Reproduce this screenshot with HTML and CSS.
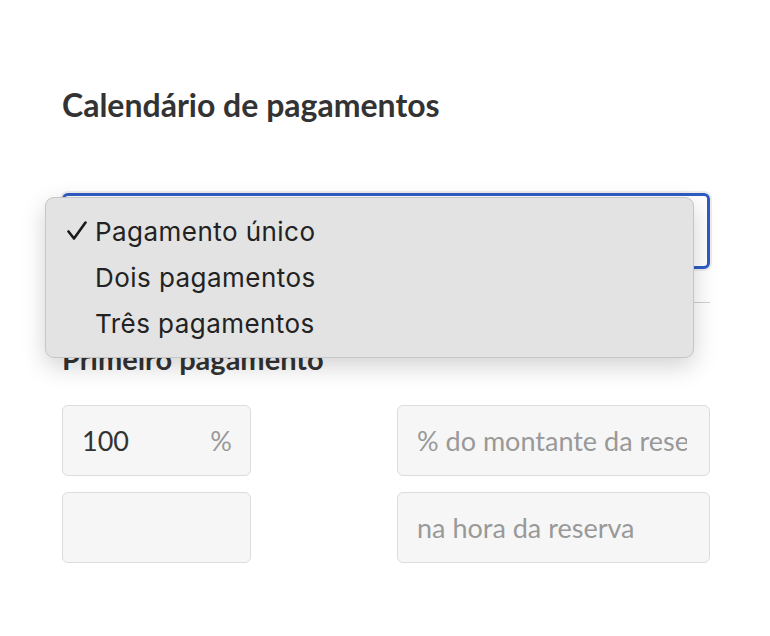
FILE: index.html
```html
<!DOCTYPE html>
<html lang="pt">
<head>
<meta charset="utf-8">
<link rel="stylesheet" href="styles.css">
</head>
<body>
<main class="page">
  <h2 class="title">Calendário de pagamentos</h2>
  <div class="select-wrap">
    <div class="select"></div>
    <ul class="menu">
      <li class="item checked"><span class="check"><svg width="20" height="20" viewBox="0 0 20 20"><path d="M1.5 10.5 L7 17.5 L18.5 1.5" fill="none" stroke="#1a1a1a" stroke-width="2.6" stroke-linecap="round" stroke-linejoin="round"/></svg></span>Pagamento único</li>
      <li class="item"><span class="check"></span>Dois pagamentos</li>
      <li class="item"><span class="check"></span>Três pagamentos</li>
    </ul>
  </div>
  <hr class="rule">
  <h3 class="subtitle">Primeiro pagamento</h3>
  <div class="fields">
    <div class="field"><span class="value">100</span><span class="unit">%</span></div>
    <div class="field wide"><span class="placeholder">% do montante da reserva</span></div>
    <div class="field"></div>
    <div class="field wide"><span class="placeholder">na hora da reserva</span></div>
  </div>
</main>
</body>
</html>
```
FILE: styles.css
```css
html, body { margin: 0; padding: 0; background: #fff; }
body { font-family: "Lato", "Open Sans", sans-serif; color: #333; }
.page { width: 648px; margin-left: 62px; padding-top: 85px; }
.title { margin: 0; font-size: 32px; font-weight: 700; line-height: 40px; color: #333; }
.select-wrap { position: relative; margin-top: 68px; }
.select {
  height: 70px; border: 3px solid #2f5cc4; border-radius: 6px;
  box-shadow: 0 0 0 2px #ececec; background: #fff;
}
.menu {
  position: absolute; left: -17px; top: 4px; width: 647px; margin: 0;
  padding: 10px 0 11px; list-style: none; background: #e3e3e3;
  border: 1px solid #c6c6c6; border-radius: 9px;
  box-shadow: 0 8px 24px rgba(0,0,0,0.18);
  font-family: "Inter", "Roboto", sans-serif; font-size: 26px; letter-spacing: 0.45px; color: #222;
}
.item { display: flex; align-items: center; height: 46px; }
.check { width: 49px; padding-left: 21px; box-sizing: border-box; display: flex; align-items: center; }
.rule { margin: 33px 0 0; border: 0; border-top: 1px solid #d0d0d0; }
.subtitle { margin: 41px 0 0; font-size: 29px; font-weight: 700; line-height: 30px; color: #333; }
.fields {
  display: grid; grid-template-columns: 189px 313px; column-gap: 146px; row-gap: 16px;
  margin-top: 31px;
}
.field {
  height: 71px; box-sizing: border-box; background: #f6f6f6; border: 1px solid #dcdcdc;
  border-radius: 6px; display: flex; align-items: center; justify-content: space-between;
  padding: 0 18px 0 19px; font-size: 27px;
}
.field.wide { padding-right: 22px; }
.value { color: #333; }
.unit { color: #999; }
.placeholder { color: #999; white-space: nowrap; overflow: hidden; flex: 1; min-width: 0; }
```
